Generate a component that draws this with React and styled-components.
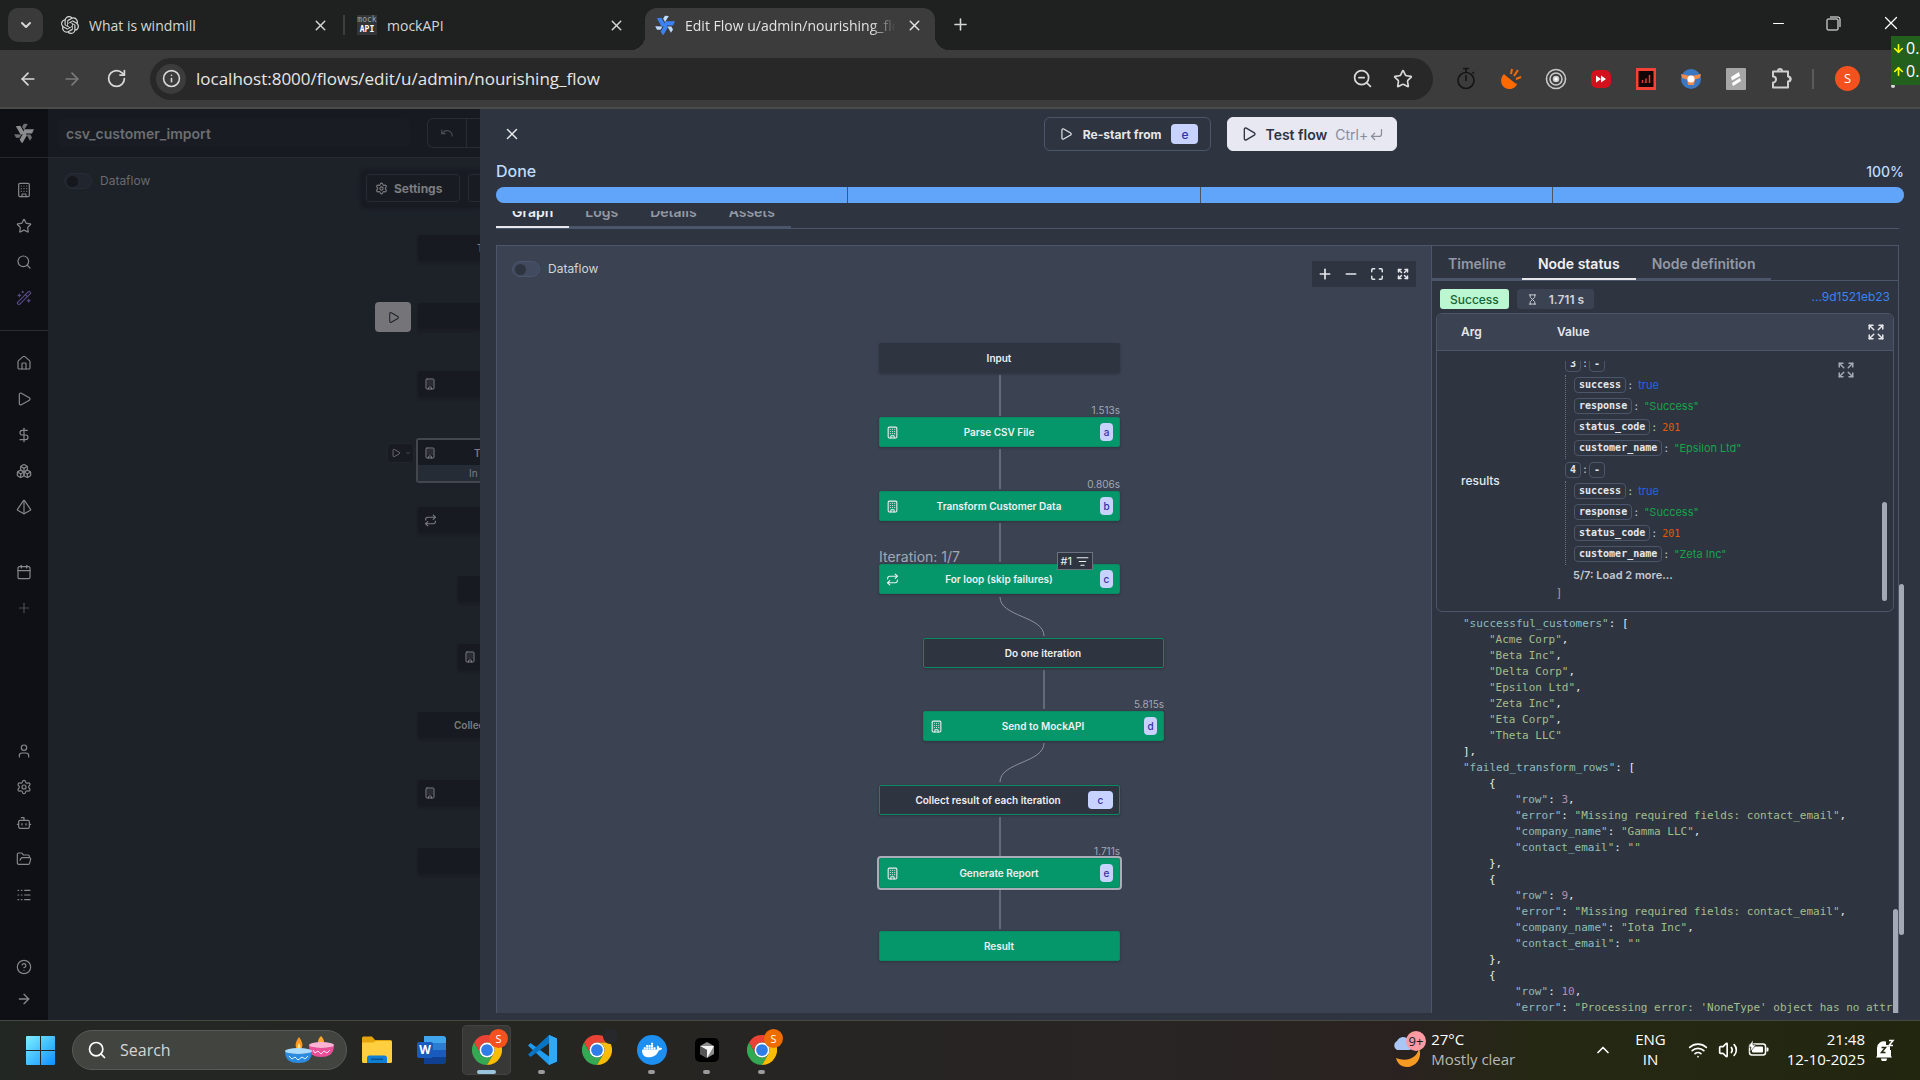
import React from "react";
import styled, { createGlobalStyle, css } from "styled-components";
import {
  ArrowLeft, ArrowRight, ArrowDown, ArrowUp, Bot, Boxes, Building, Calendar, ChevronDown, ChevronUp,
  CornerDownLeft, DollarSign, Expand, FolderOpen, HelpCircle, Home, Hourglass, Info, ListFilter, Logs,
  Maximize, Minus, Play, Plus, Pyramid, Repeat, RotateCw, Search, Settings, Star, Undo, User,
  Volume2, WandSparkles, Wifi, X, ZoomOut,
} from "lucide-react";
import { SiDocker, SiOpenai } from "react-icons/si";

const nord = {
  bg: "#2e3440",
  surface: "#3b4252",
  line: "#4c566a",
  text: "#e5e7eb",
  muted: "#a3a8b3",
};

const ui = `"Open Sans", "Noto Sans", sans-serif`;
const mono = `"DejaVu Sans Mono", "Liberation Mono", monospace`;

const GlobalStyle = createGlobalStyle`
  * { box-sizing: border-box; }
  body { margin: 0; background: #1f2120; overflow: hidden; }
  button, input { font: inherit; color: inherit; }
  button { background: none; border: 0; padding: 0; cursor: pointer; }
  a { text-decoration: none; }
  svg { display: block; flex: none; }
`;

const Screen = styled.div`
  display: flex;
  flex-direction: column;
  height: 100vh;
  font-family: Inter, sans-serif;
  color: ${nord.text};
`;

/* ---------- browser chrome ---------- */

const TabStrip = styled.div`
  display: flex;
  align-items: flex-end;
  height: 50px;
  flex: none;
  background: #1f2120;
  font-family: ${ui};
  font-size: 14px;
  color: #d5d6d6;
`;

const TabSearch = styled.button`
  display: grid;
  place-items: center;
  width: 35px;
  height: 34px;
  margin: 0 8px 8px;
  border-radius: 10px;
  background: #3a3a3a;
`;

const BrowserTab = styled.div`
  position: relative;
  display: flex;
  align-items: center;
  gap: 10px;
  width: 290px;
  height: 42px;
  padding: 0 12px 8px 10px;
  ${(p) => p.$active && css`
    margin-left: 8px;
    color: #e3e3e3;
    background: #3c3c3c;
    border-radius: 12px 12px 0 0;
    &::before, &::after {
      content: "";
      position: absolute;
      bottom: 0;
      width: 14px;
      height: 14px;
    }
    &::before { left: -14px; background: radial-gradient(circle at 0 0, transparent 14px, #3c3c3c 14px); }
    &::after { right: -14px; background: radial-gradient(circle at 100% 0, transparent 14px, #3c3c3c 14px); }
  `}
`;

const TabTitle = styled.span`
  flex: 1;
  min-width: 0;
  overflow: hidden;
  white-space: nowrap;
  ${(p) => p.$fade && css`mask-image: linear-gradient(90deg, #000 88%, transparent);`}
`;

const TabDivider = styled.span`
  width: 2px;
  height: 20px;
  margin: 0 2px 15px;
  background: #3c3e3d;
`;

const MockIcon = styled.span`
  display: grid;
  width: 20px;
  height: 20px;
  background: #333536;
  font: 700 8px/10px ${mono};
  text-align: center;
  color: #fff;
  & > span { color: #9aa3ad; font-weight: 400; }
`;

const NewTab = styled.button`
  margin: 0 0 16px 16px;
`;

const WindowButtons = styled.div`
  display: flex;
  align-items: center;
  gap: 39px;
  margin: 0 18px 16px auto;
  color: #fff;
`;

const AddressRow = styled.div`
  display: flex;
  align-items: center;
  height: 59px;
  flex: none;
  padding: 0 8px 0 18px;
  background: #3c3c3c;
  border-bottom: 2px solid #4a4c49;
  color: #d8d8d8;
  font-family: ${ui};
`;

const NavButtons = styled.div`
  display: flex;
  gap: 24px;
  width: 132px;
  & > :nth-child(2) { color: #7b7b7b; }
`;

const Omnibox = styled.div`
  display: flex;
  align-items: center;
  flex: 1;
  height: 42px;
  padding: 0 20px 0 6px;
  gap: 20px;
  border-radius: 21px;
  background: #282828;
`;

const SiteInfo = styled.button`
  display: grid;
  place-items: center;
  width: 30px;
  height: 30px;
  border-radius: 50%;
  background: #3c3c3c;
`;

const UrlInput = styled.input`
  flex: 1;
  min-width: 0;
  margin-left: -10px;
  padding: 0;
  border: 0;
  outline: 0;
  background: none;
  font-size: 17px;
  color: #e6e6e6;
`;

const Extensions = styled.div`
  display: flex;
  align-items: center;
  gap: 23px;
  padding-left: 22px;
`;

const Divider = styled.span`
  width: 2px;
  height: 20px;
  margin: 0 -2px 0 -3px;
  background: #5b5b5b;
`;

const Avatar = styled.span`
  display: grid;
  place-items: center;
  width: ${(p) => p.$size || 25}px;
  height: ${(p) => p.$size || 25}px;
  border-radius: 50%;
  background: ${(p) => p.$color || "#f4511e"};
  color: #fff;
  font-size: ${(p) => (p.$size ? 11 : 13)}px;
  line-height: 1;
`;

const MenuDots = styled.button`
  display: grid;
  gap: 3px;
  width: 4px;
  margin-left: 8px;
  margin-right: 17px;
  & > i { width: 4px; height: 4px; border-radius: 50%; background: #d8d8d8; }
`;

const NetMeter = styled.div`
  position: absolute;
  top: 36px;
  right: 0;
  width: 29px;
  height: 49px;
  padding: 1px 0 0 1px;
  overflow: hidden;
  background: #235f1d;
  color: #fff;
  font: 16px/23px ${ui};
  & > div { display: flex; align-items: center; gap: 1px; }
  svg { color: #ffff00; }
`;

/* ---------- dimmed editor ---------- */

const Workspace = styled.div`
  display: flex;
  flex: 1;
  min-height: 0;
  background: #1d2128;
`;

const Sidebar = styled.nav`
  display: flex;
  flex-direction: column;
  width: 48px;
  flex: none;
  padding-bottom: 7px;
  background: #0f1015;
  color: #86878a;
`;

const SideLogo = styled.a`
  display: grid;
  place-items: center;
  height: 49px;
  border-bottom: 1px solid #24272c;
`;

const SideGroup = styled.div`
  display: flex;
  flex-direction: column;
  padding: ${(p) => p.$pad || "0"};
  ${(p) => p.$line && css`border-bottom: 1px solid #2b2d32;`}
  ${(p) => p.$push && css`margin-top: auto;`}
`;

const SideItem = styled.a`
  display: grid;
  place-items: center;
  height: ${(p) => (p.$short ? 28 : 36)}px;
  color: ${(p) => p.$color || "inherit"};
`;

const Editor = styled.section`
  display: flex;
  flex-direction: column;
  flex: 1;
  min-width: 0;
  overflow: hidden;
  color: #7b7d81;
`;

const EditorHeader = styled.header`
  display: flex;
  align-items: center;
  justify-content: space-between;
  height: 49px;
  flex: none;
  padding-left: 10px;
  background: #171a20;
  border-bottom: 1px solid #282b30;
`;

const FlowName = styled.input`
  width: 352px;
  height: 28px;
  flex: none;
  padding: 0 8px;
  border: 0;
  border-radius: 4px;
  background: #191c22;
  font-size: 14px;
  font-weight: 600;
  color: #6c6e72;
`;

const SplitButtons = styled.div`
  display: flex;
  width: 53px;
  height: 30px;
  border: 1px solid #292c33;
  border-right: 0;
  border-radius: 6px 0 0 6px;
  color: #4c4f55;
  & > button {
    display: grid;
    place-items: center;
    width: 39px;
    border-right: 1px solid #292c33;
  }
`;

const EditorCanvas = styled.div`
  position: relative;
  flex: 1;
`;

const EditorBar = styled.div`
  display: flex;
  justify-content: space-between;
  align-items: flex-start;
  padding: 12px 0 0 16px;
`;

const SettingsPanel = styled.div`
  display: flex;
  gap: 8px;
  padding: 4px 0 4px 4px;
  border-radius: 4px 0 0 4px;
  background: #181b22;
  box-shadow: 0 1px 4px #14171c;
`;

const DarkButton = styled.button`
  display: flex;
  align-items: center;
  gap: 6px;
  width: ${(p) => (p.$open ? 12 : 94)}px;
  height: 28px;
  padding: 0 ${(p) => (p.$open ? 0 : 8)}px;
  border: 1px solid #282b32;
  border-right-width: ${(p) => (p.$open ? 0 : 1)}px;
  border-radius: ${(p) => (p.$open ? "4px 0 0 4px" : "4px")};
  font-size: 12px;
  font-weight: 700;
`;

const SwitchLabel = styled.label`
  display: flex;
  align-items: center;
  gap: 8px;
  font-size: 12px;
  line-height: 22px;
  color: ${(p) => (p.$dim ? "#696b70" : "#d1d5db")};
`;

const Switch = styled.input.attrs({ type: "checkbox" })`
  appearance: none;
  display: flex;
  align-items: center;
  width: 28px;
  height: 16px;
  margin: 0;
  padding: 0 2px;
  border-radius: 8px;
  border: 1px solid ${(p) => (p.$dim ? "#282c35" : "#4a556b")};
  background: ${(p) => (p.$dim ? "#21252d" : "#414a5e")};
  &::before {
    content: "";
    width: 11px;
    height: 11px;
    border-radius: 50%;
    background: ${(p) => (p.$dim ? "#15171c" : "#2e3440")};
  }
`;

const GhostNode = styled.div`
  position: absolute;
  left: ${(p) => p.$x}px;
  top: ${(p) => p.$y}px;
  right: 0;
  display: flex;
  align-items: center;
  height: 26px;
  padding-left: ${(p) => p.$indent || 6}px;
  background: #171a20;
  border-radius: 2px 0 0 2px;
  box-shadow: 0 2px 3px #1a1d23;
  font-size: 10px;
  font-weight: 600;
  white-space: nowrap;
  overflow: hidden;
`;

const GhostSelected = styled.div`
  position: absolute;
  left: 368px;
  top: 280px;
  right: 0;
  border: 2px solid #43464c;
  border-right: 0;
  border-radius: 3px 0 0 3px;
  font-size: 10px;
  font-weight: 600;
  & > div {
    display: flex;
    align-items: center;
    gap: 38px;
    height: 25px;
    padding-left: 6px;
    overflow: hidden;
    background: #171a20;
  }
  & > div + div { height: 16px; padding-left: 51px; background: #262c36; font-weight: 400; }
`;

const GhostRun = styled.button`
  position: absolute;
  left: 327px;
  top: 144px;
  display: grid;
  place-items: center;
  width: 36px;
  height: 30px;
  border-radius: 4px;
  background: #757479;
  color: #22252c;
`;

const GhostSplit = styled.button`
  position: absolute;
  left: 339px;
  top: 285px;
  display: flex;
  align-items: center;
  gap: 4px;
  width: 27px;
  height: 20px;
  padding-left: 3px;
  border: 1px solid #22252b;
  border-radius: 4px;
  background: #181b21;
`;

/* ---------- drawer ---------- */

const Drawer = styled.section`
  display: flex;
  flex-direction: column;
  flex: 0 0 75%;
  min-width: 0;
  padding: 8px 16px 7px;
  background: ${nord.bg};
`;

const DrawerHeader = styled.header`
  display: flex;
  justify-content: space-between;
  align-items: center;
  height: 34px;
  flex: none;
  padding-left: 7px;
`;

const Actions = styled.div`
  display: flex;
  gap: 16px;
  flex: 1;
  justify-content: center;
  padding-left: 16px;
`;

const RestartButton = styled.button`
  display: flex;
  align-items: center;
  gap: 10px;
  height: 34px;
  padding: 0 12px 0 14px;
  border: 1px solid ${nord.line};
  border-radius: 6px;
  font-size: 12px;
  font-weight: 700;
  ${(p) => p.$primary && css`
    gap: 8px;
    padding: 0 12px 0 13px;
    border-color: #e8e8f3;
    background: #e8e8f3;
    color: #2e3440;
    font-size: 14px;
    font-weight: 600;
  `}
`;

const Shortcut = styled.span`
  display: flex;
  align-items: center;
  gap: 1px;
  color: #878c99;
  font-weight: 400;
`;

const Badge = styled.span`
  display: grid;
  place-items: center;
  min-width: ${(p) => p.$min || 13}px;
  height: ${(p) => p.$height || 18}px;
  padding: 0 3px;
  border-radius: 4px;
  background: #c7d2fe;
  color: #3730a3;
  font-size: ${(p) => p.$size || 10}px;
  font-weight: 500;
`;

const ProgressHead = styled.div`
  display: flex;
  justify-content: space-between;
  align-items: flex-end;
  height: 20px;
  margin: 10px 0 6px;
  font-size: 16px;
  line-height: 20px;
  font-weight: 500;
  color: #bfdbfe;
  & > output { font-size: 14px; line-height: 18px; }
`;

const Progress = styled.div`
  display: grid;
  grid-template-columns: repeat(4, 1fr);
  gap: 1px;
  height: 16px;
  flex: none;
  border-radius: 8px;
  overflow: hidden;
  background: #4b5563;
  & > span { background: #60a5fa; }
`;

const Scroller = styled.div`
  position: relative;
  display: flex;
  flex-direction: column;
  flex: 1;
  min-height: 0;
  margin-top: 8px;
  padding-right: 5px;
  overflow: hidden;
`;

const Thumb = styled.span`
  position: absolute;
  right: ${(p) => p.$right || 0}px;
  top: ${(p) => p.$top}px;
  width: 5px;
  height: ${(p) => p.$height}px;
  border-radius: 3px;
  background: #a3a9b5;
`;

const Tabs = styled.div`
  display: flex;
  flex: none;
  height: 35px;
  margin-top: ${(p) => (p.$scrolled ? -17 : 0)}px;
  border-bottom: 1px solid ${nord.line};
`;

const Tab = styled.button`
  height: 100%;
  padding: 2px 16px 0;
  border-bottom: 2px solid ${(p) => (p.$active ? "#e5e7eb" : nord.line)};
  font-size: 14px;
  font-weight: 600;
  color: ${(p) => (p.$active ? "#eef0f3" : "#9298a5")};
`;

const Split = styled.div`
  display: flex;
  flex: 1;
  min-height: 0;
  margin-top: 16px;
  border: 1px solid ${nord.line};
  border-bottom: 0;
`;

const Graph = styled.div`
  position: relative;
  flex: 1;
  min-width: 0;
  overflow: hidden;
  background: ${nord.surface};
`;

const GraphBar = styled.div`
  display: flex;
  justify-content: space-between;
  align-items: flex-start;
  padding: 12px 15px 0;
`;

const Controls = styled.div`
  display: flex;
  margin-top: 3px;
  height: 26px;
  background: ${nord.bg};
  color: #e5e7eb;
  & > button { display: grid; place-items: center; width: 26px; }
`;

const Edges = styled.svg`
  position: absolute;
  left: 0;
  top: 0;
  fill: none;
  stroke: #8b909c;
`;

const NodeBox = styled.div`
  position: absolute;
  left: ${(p) => p.$x}px;
  top: ${(p) => p.$y}px;
  display: grid;
  grid-template-columns: 28px 1fr 28px;
  align-items: center;
  justify-items: center;
  width: 241px;
  height: 30px;
  padding: 0 6px 0 5px;
  border: 1px solid ${(p) => (p.$kind === "plain" ? "#2e3440" : "#0a8a61")};
  border-radius: 2px;
  background: ${(p) => (p.$kind === "done" ? "#059669" : "#2e3440")};
  box-shadow: 0 1px 3px rgba(0, 0, 0, 0.25);
  ${(p) => p.$selected && css`outline: 2px solid #a9adb8;`}
  font-size: 10px;
  font-weight: 600;
  color: #eef0f3;
  & > svg { justify-self: start; margin-left: 1px; }
  & > b { font-weight: 600; line-height: 12px; padding-bottom: 1px; grid-column: 2; white-space: nowrap; }
  & > ${Badge} { grid-column: 3; justify-self: end; }
  ${(p) => p.$wide && css`grid-template-columns: 6px 1fr 28px;`}
`;

const Above = styled.span`
  position: absolute;
  bottom: 29px;
  ${(p) => (p.$left ? "left: -1px;" : "right: -1px;")}
  font-size: ${(p) => (p.$left ? 14 : 10)}px;
  line-height: 14px;
  font-weight: 400;
  color: ${nord.muted};
`;

const IterationPicker = styled.button`
  position: absolute;
  right: 26px;
  top: -13px;
  display: flex;
  align-items: center;
  gap: 4px;
  height: 18px;
  padding: 0 3px;
  border: 1px solid #6b7280;
  background: ${nord.bg};
  font-size: 11px;
  font-weight: 400;
`;

const Details = styled.div`
  position: relative;
  display: flex;
  flex-direction: column;
  flex: 0 0 calc(100% / 3);
  min-width: 0;
  border-left: 1px solid ${nord.line};
  overflow: hidden;
`;

const StatusRow = styled.div`
  display: flex;
  align-items: flex-start;
  gap: 8px;
  padding: 8px 8px 4px;
  font-size: 12px;
  & > a { margin-left: auto; line-height: 15px; color: #3b82f6; }
`;

const Pill = styled.span`
  display: flex;
  align-items: center;
  gap: 11px;
  height: 20px;
  padding: 0 10px;
  border-radius: 3px;
  font-weight: ${(p) => (p.$ok ? 500 : 600)};
  background: ${(p) => (p.$ok ? "#bbf7d0" : nord.surface)};
  color: ${(p) => (p.$ok ? "#166534" : "#d1d5db")};
`;

const TableCard = styled.div`
  position: relative;
  flex: none;
  margin: 0 4px;
  border: 1px solid ${nord.line};
  border-radius: 6px;
  overflow: hidden;
`;

const Table = styled.table`
  width: 100%;
  border-collapse: collapse;
  table-layout: fixed;
  font-size: 12px;
  text-align: left;
  th { height: 36px; padding: 0 0 0 24px; background: ${nord.surface}; border-bottom: 1px solid ${nord.line}; font-weight: 600; }
  th:first-child { width: 96px; }
  td { padding: 10px 0 10px 24px; font-weight: 500; }
`;

const HeadCell = styled.div`
  display: flex;
  justify-content: space-between;
  align-items: center;
  padding-right: 8px;
`;

const ValueView = styled.div`
  position: relative;
  display: flex;
  flex-direction: column;
  justify-content: flex-end;
  height: 240px;
  overflow: hidden;
  font-size: 11px;
  font-weight: 400;
  & > * { flex-shrink: 0; }
`;

const JsonGroup = styled.div`
  margin-left: 8px;
`;

const JsonChildren = styled.div`
  border-left: 1px dotted #6b7280;
  padding-left: 8px;
`;

const JsonRow = styled.div`
  display: flex;
  align-items: center;
  gap: 1px;
  height: ${(p) => (p.$head ? 22 : 21)}px;
  font-family: ${mono};
  font-size: 10px;
  color: #c4c8d0;
`;

const Key = styled.span`
  height: 16px;
  padding: 0 4px;
  border: 1px solid ${nord.line};
  border-radius: 4px;
  line-height: 13px;
  font-weight: 700;
  color: #e5e7eb;
`;

const JsonValue = styled.span`
  margin-left: 4px;
  font-family: ${(p) => (p.$type === "number" ? mono : "Inter, sans-serif")};
  font-size: ${(p) => (p.$type === "number" ? 10 : 11)}px;
  color: ${(p) => ({ boolean: "#2563eb", string: "#16a34a", number: "#ea580c" }[p.$type])};
`;

const LoadMore = styled.button`
  align-self: flex-start;
  margin-left: 16px;
  height: 20px;
  font-size: 11px;
  font-weight: 600;
  color: #c4c8d0;
`;

const CloseBracket = styled.div`
  height: 16px;
  line-height: 16px;
  color: #a3a8b3;
`;

const FloatingExpand = styled.button`
  position: absolute;
  right: 38px;
  top: 47px;
  color: #a3a8b3;
`;

const Code = styled.pre`
  flex: 1;
  min-height: 0;
  margin: 4px 5px 0 5px;
  overflow: hidden;
  font: 11px/16px ${mono};
  color: #e5e9f0;
`;

const CodeLine = styled.div`
  height: 16px;
  padding-left: ${(p) => p.$depth * 26}px;
`;

const Token = styled.span`
  color: ${(p) => ({ key: "#8fbcbb", string: "#a3be8c", number: "#b48ead" }[p.$type])};
`;

/* ---------- task bar ---------- */

const Taskbar = styled.footer`
  display: flex;
  align-items: center;
  height: 60px;
  flex: none;
  padding: 0 25px 1px 26px;
  border-top: 1px solid #474840;
  background: linear-gradient(90deg, #232723 0%, #262522 35%, #282524 60%, #2a2220 73%, #252813 80%, #23260f 100%);
  font-family: ${ui};
  color: #fff;
`;

const SearchBox = styled.label`
  display: flex;
  align-items: center;
  gap: 13px;
  width: 275px;
  height: 40px;
  margin-left: 17px;
  padding: 0 11px 0 14px;
  border: 1px solid #595a56;
  border-radius: 20px;
  background: #42443f;
  & > input {
    flex: 1;
    min-width: 0;
    padding: 0;
    border: 0;
    outline: 0;
    background: none;
    font-size: 16px;
    &::placeholder { color: #d6d6d4; opacity: 1; }
  }
`;

const Apps = styled.div`
  display: flex;
  gap: 6px;
  margin-left: 5px;
`;

const AppButton = styled.button`
  position: relative;
  display: grid;
  place-items: center;
  width: 49px;
  height: 50px;
  border-radius: 5px;
  ${(p) => p.$active && css`background: #383937; box-shadow: inset 0 0 0 1px #434441;`}
  &::after {
    content: "";
    position: absolute;
    bottom: 1px;
    width: ${(p) => (p.$active ? 19 : 7)}px;
    height: 4px;
    border-radius: 2px;
    background: ${(p) => (p.$active ? "#9ac4dc" : p.$running ? "#9b9b9b" : "transparent")};
  }
  & > ${Avatar} { position: absolute; right: 3px; top: 4px; }
`;

const Tray = styled.div`
  display: flex;
  align-items: center;
  margin-left: auto;
  font-size: 15px;
  line-height: 20px;
`;

const Weather = styled.button`
  display: flex;
  align-items: center;
  gap: 5px;
  width: 201px;
  text-align: left;
  & > span { padding-bottom: 3px; }
  & small { display: block; font-size: 15px; color: #b9b9b4; }
`;

const TrayText = styled.div`
  text-align: ${(p) => p.$align};
  margin: ${(p) => p.$margin};
  padding-bottom: 3px;
`;

const TrayIcons = styled.div`
  display: flex;
  gap: 10px;
`;

/* ---------- drawings ---------- */

function WindmillMark({ size, dark, light }) {
  return (
    <svg width={size} height={size} viewBox="0 0 24 24" aria-hidden="true">
      {[0, 120, 240].map((a) => (
        <g key={a} transform={`rotate(${a} 12 12)`}>
          <path d="M10 12.5 12.6 7.6 24 7.6 21.6 12.5Z" fill={dark} />
          <path d="M15 13.8h4.6l2 3.6-2.4 4Z" fill={light} />
        </g>
      ))}
    </svg>
  );
}

function ChromeMark() {
  return (
    <svg width="30" height="30" viewBox="0 0 48 48" aria-hidden="true">
      <path fill="#ea4335" d="M3.2 12A24 24 0 0 1 44.8 12H24A12 12 0 0 0 13.6 30Z" />
      <path fill="#34a853" d="M3.2 12 13.6 30A12 12 0 0 0 34.4 30L24 48A24 24 0 0 1 3.2 12Z" />
      <path fill="#fbbc04" d="M44.8 12A24 24 0 0 1 24 48L34.4 30A12 12 0 0 0 24 12Z" />
      <circle cx="24" cy="24" r="12" fill="#fff" />
      <circle cx="24" cy="24" r="9.4" fill="#2f7de9" />
    </svg>
  );
}

function WindowsMark() {
  return (
    <svg width="29" height="29" viewBox="0 0 29 29" aria-hidden="true">
      <linearGradient id="win" x1="0" y1="0" x2="1" y2="1" gradientUnits="objectBoundingBox">
        <stop offset="0" stopColor="#7df0ff" />
        <stop offset="1" stopColor="#0f8fff" />
      </linearGradient>
      <path fill="url(#win)" d="M1 0h13v14H0V1a1 1 0 0 1 1-1ZM15 0h13a1 1 0 0 1 1 1v13H15ZM0 15h14v14H1a1 1 0 0 1-1-1ZM15 15h14v13a1 1 0 0 1-1 1H15Z" />
    </svg>
  );
}

function Diyas() {
  return (
    <svg width="50" height="28" viewBox="0 0 50 28" aria-hidden="true">
      <path d="M14 1c4 5 5 11 0 14-5-3-4-9 0-14Z" fill="#ff9a1f" />
      <path d="M14 7c2 3 2 6 0 8-2-2-2-5 0-8Z" fill="#ffe08a" />
      <path d="M36 0c4 4 4 8 0 11-4-3-4-7 0-11Z" fill="#ffa733" />
      <path d="M24 9c0 9 4 12 12 12s13-3 13-12c-3 4-22 4-25 0Z" fill="#ec4f9a" />
      <ellipse cx="36.500" cy="9" rx="12.500" ry="3" fill="#ffb3d4" />
      <path d="M28 14l2 3 3-2 3 3 3-3 3 2 3-3" stroke="#ffe3ef" fill="none" />
      <path d="M0 15c0 9 5 12 13.500 12S27 24 27 15c-3 4-24 4-27 0Z" fill="#2b8be0" />
      <ellipse cx="13.500" cy="15" rx="13.500" ry="3" fill="#a9dcff" />
      <path d="M4 20l3 3 3-2 3 3 4-3 3 2 3-3" stroke="#dff2ff" fill="none" />
    </svg>
  );
}

function FolderMark() {
  return (
    <svg width="30" height="28" viewBox="0 0 30 28" aria-hidden="true">
      <path d="M0 2a1.500 1.500 0 0 1 1.500-1.500h8.500L13 4h15.500A1.500 1.500 0 0 1 30 5.500V10H0Z" fill="#e5a50a" />
      <path d="M0 6.500h11L14 5h14.500A1.500 1.500 0 0 1 30 6.500v19a1.500 1.500 0 0 1-1.500 1.500h-27A1.500 1.500 0 0 1 0 25.500Z" fill="#ffcf3f" />
      <path d="M5 27v-5a2.500 2.500 0 0 1 2.500-2.500h15A2.500 2.500 0 0 1 25 22v5Z" fill="#0f7fd4" />
      <path d="M9 23.300h12" stroke="#0a4f8f" strokeWidth="1.500" />
    </svg>
  );
}

const WordTile = styled.span`
  display: grid;
  align-items: center;
  width: 29px;
  height: 28px;
  border-radius: 3px;
  background: linear-gradient(#41a5ee 0 25%, #2b7cd3 25% 50%, #185abd 50% 75%, #103f91 75%) right / 22px 100% no-repeat;
  & > b {
    width: 16px;
    height: 16px;
    border-radius: 2px;
    background: #185abd;
    font-size: 12px;
    line-height: 16px;
    text-align: center;
  }
`;

function CodeMark() {
  return (
    <svg width="30" height="30" viewBox="0 0 30 30" aria-hidden="true">
      <path d="M22 0 30 3.500v23L22 30 1 10.500 3.500 8 22 21.500Z" fill="#1f9cf0" />
      <path d="M22 0v8.500L3.500 22 1 19.500Z" fill="#0a74c4" />
      <path d="M22 0 30 3.500v23L22 30Z" fill="#2fa8f5" />
    </svg>
  );
}

function CursorMark() {
  return (
    <svg width="24" height="24" viewBox="0 0 24 24" aria-hidden="true">
      <rect width="24" height="24" rx="5" fill="#000" />
      <path d="M12 4 19 8v8l-7 4-7-4V8Z" fill="#8b8b8b" />
      <path d="M5 8h14l-7 12V12Z" fill="#f4f4f4" />
      <path d="M5 8l7 4v8l-7-4Z" fill="#555" />
    </svg>
  );
}

const DockerTile = styled.span`
  display: grid;
  place-items: center;
  width: 30px;
  height: 30px;
  border-radius: 50%;
  background: #1d8ff0;
  color: #fff;
`;

function WeatherMark() {
  return (
    <svg width="34" height="38" viewBox="0 0 34 38" aria-hidden="true">
      <path d="M27 17c4 11-4 19-12 19-6 0-10-4-11-9 10 4 21 1 23-10Z" fill="#f59a23" />
      <path d="M5 19a5 5 0 0 1 0-9 7 7 0 0 1 12-1 5 5 0 0 1 0 10Z" fill="#a9c6f5" />
      <circle cx="24" cy="10" r="10" fill="#ff99a4" />
      <text x="24" y="15" textAnchor="middle" fontSize="13" fontFamily="Open Sans" fill="#1b1b1b">9+</text>
    </svg>
  );
}

function BatteryMark() {
  return (
    <svg width="21" height="18" viewBox="0 0 21 18" aria-hidden="true">
      <rect x="1.500" y="4" width="16" height="11" rx="2.500" fill="none" stroke="#fff" strokeWidth="1.500" />
      <rect x="4" y="6.500" width="11" height="6" rx="1" fill="#fff" />
      <path d="M18.500 7.500h1a1 1 0 0 1 1 1v2a1 1 0 0 1-1 1h-1Z" fill="#fff" />
      <path d="M5 0 0 7h3l-1 5 6-7H5Z" fill="#fff" stroke="#23260f" strokeWidth=".6" />
    </svg>
  );
}

function BellMark() {
  return (
    <svg width="20" height="22" viewBox="0 0 20 22" aria-hidden="true">
      <path d="M2 17V9a7 7 0 0 1 9-6.500V6h4v5h1v6l1 1.500H1ZM6 19.500h6a3 3 0 0 1-6 0Z" fill="#fff" />
      <path d="M6.500 8.500h4l-4 5h4M14 1.500h4l-4 5h4" fill="none" stroke="#23260f" strokeWidth="1.500" />
      <path d="M14 1.500h4l-4 5h4" fill="none" stroke="#fff" strokeWidth="1.500" />
    </svg>
  );
}

function ExtensionIcons() {
  return (
    <>
      <svg width="22" height="24" viewBox="0 0 22 24" fill="none" stroke="#151515" strokeWidth="1.600">
        <circle cx="11" cy="13.500" r="8" /><path d="M11 8v6M8 1.500h6M11 2v3M17.500 5l1.500 1.500" />
      </svg>
      <svg width="22" height="24" viewBox="0 0 22 24" fill="#ff6a00">
        <path d="M4 7c-6 6-2 15 5 15 4 0 7-2 8-5Z" /><path d="M5 7l11 9" stroke="#3c3c3c" strokeWidth="1.500" />
        <path d="M11 7l1-5M14 9l4-6M16 12l5-2" stroke="#ff6a00" strokeWidth="2" />
      </svg>
      <svg width="22" height="24" viewBox="0 0 22 24" fill="none" stroke="#c9c9c9" strokeWidth="1.600">
        <circle cx="11" cy="12" r="9.500" /><circle cx="11" cy="12" r="6" /><circle cx="11" cy="12" r="2.500" fill="#fff" />
      </svg>
      <svg width="22" height="24" viewBox="0 0 22 24">
        <rect x="1" y="3" width="20" height="18" rx="6" fill="#d4101c" />
        <path d="M6 8.500l5 3.500-5 3.500ZM11 8.500l5 3.500-5 3.500Z" fill="#fff" />
      </svg>
      <svg width="22" height="24" viewBox="0 0 22 24">
        <path d="M1 1h20v22H1Z" fill="#f44336" /><path d="M3.500 4h15v16h-15Z" fill="#120505" />
        <path d="M7.500 16v-3M10.500 16v-1.500M11 11.500V16M14.500 8v8" stroke="#e53935" strokeWidth="1.500" />
      </svg>
      <svg width="22" height="24" viewBox="0 0 22 24">
        <circle cx="11" cy="12" r="10" fill="#3b78c4" />
        <path d="M1 7l7 1.500h6L21 7l-1 4-5 1.500L14 18H8l-1-5.500L2 11Z" fill="#f08a4b" />
        <circle cx="11" cy="12" r="3.500" fill="#fff" />
      </svg>
      <svg width="22" height="24" viewBox="0 0 22 24">
        <rect x="1" y="1" width="20" height="22" rx="1" fill="#a6a6a6" />
        <path d="M6 10l8-5 1 4-8 4.500ZM7 16l8-5 1 3-8 5Z" fill="#fff" />
      </svg>
      <svg width="22" height="24" viewBox="0 0 22 24" fill="none" stroke="#d0d0d0" strokeWidth="2">
        <path d="M3 4.500h15v5a2 2 0 0 1 0 5v6H3v-5a3 3 0 0 0 0-6Z" strokeLinejoin="round" />
        <path d="M8 4a2 2 0 0 1 4 0M18.500 10a2 2 0 0 1 0 4" />
      </svg>
    </>
  );
}

/* ---------- data ---------- */

const graphNodes = [
  { x: 382, y: 97, label: "Input", kind: "plain" },
  { x: 382, y: 171, label: "Parse CSV File", kind: "done", icon: Building, id: "a", time: "1.513s" },
  { x: 382, y: 245, label: "Transform Customer Data", kind: "done", icon: Building, id: "b", time: "0.806s" },
  { x: 382, y: 318, label: "For loop (skip failures)", kind: "done", icon: Repeat, id: "c", loop: true },
  { x: 426, y: 392, label: "Do one iteration", kind: "outline" },
  { x: 426, y: 465, label: "Send to MockAPI", kind: "done", icon: Building, id: "d", time: "5.815s" },
  { x: 382, y: 539, label: "Collect result of each iteration", kind: "outline", id: "c", wide: true },
  { x: 382, y: 612, label: "Generate Report", kind: "done", icon: Building, id: "e", time: "1.711s", selected: true },
  { x: 382, y: 685, label: "Result", kind: "done" },
];

const edges = [
  "M503 129V170", "M503 203V243", "M503 277V316",
  "M503 351C503 371 547 370 547 390",
  "M547 424V463",
  "M547 497C547 517 503 516 503 536",
  "M503 571V611", "M503 643V683",
];

const results = [
  { index: 3, name: "Epsilon Ltd" },
  { index: 4, name: "Zeta Inc" },
];

const report = `    "successful_customers": [
        "Acme Corp",
        "Beta Inc",
        "Delta Corp",
        "Epsilon Ltd",
        "Zeta Inc",
        "Eta Corp",
        "Theta LLC"
    ],
    "failed_transform_rows": [
        {
            "row": 3,
            "error": "Missing required fields: contact_email",
            "company_name": "Gamma LLC",
            "contact_email": ""
        },
        {
            "row": 9,
            "error": "Missing required fields: contact_email",
            "company_name": "Iota Inc",
            "contact_email": ""
        },
        {
            "row": 10,
            "error": "Processing error: 'NoneType' object has no attribute"`;

function highlight(line) {
  return line.split(/("[^"]*"(?=:)|"[^"]*"|\b\d+\b)/).filter(Boolean).map((part, i, all) => {
    if (/^\d/.test(part)) return <Token key={i} $type="number">{part}</Token>;
    if (!part.startsWith('"')) return part;
    return <Token key={i} $type={(all[i + 1] || "").startsWith(":") ? "key" : "string"}>{part}</Token>;
  });
}

const sideTop = [Building, Star, Search, WandSparkles];
const sideMain = [Home, Play, DollarSign, Boxes, Pyramid];
const sideLow = [User, Settings, Bot, FolderOpen, Logs];

/* ---------- sections ---------- */

function Browser() {
  return (
    <>
      <TabStrip>
        <TabSearch aria-label="Search tabs"><ChevronDown size={16} strokeWidth={3} /></TabSearch>
        <BrowserTab>
          <SiOpenai size={18} /><TabTitle>What is windmill</TabTitle><X size={17} />
        </BrowserTab>
        <TabDivider />
        <BrowserTab>
          <MockIcon><span>mock</span>API</MockIcon><TabTitle>mockAPI</TabTitle><X size={17} />
        </BrowserTab>
        <BrowserTab $active>
          <WindmillMark size={20} dark="#3b82f6" light="#bfdbfe" />
          <TabTitle $fade>Edit Flow u/admin/nourishing_flow</TabTitle><X size={17} />
        </BrowserTab>
        <NewTab aria-label="New tab"><Plus size={19} /></NewTab>
        <WindowButtons>
          <Minus size={17} strokeWidth={1.5} />
          <svg width="15" height="15" viewBox="0 0 15 15" fill="none" stroke="#fff"><rect x="1" y="3" width="11" height="11" rx="1" /><path d="M4 1h8a2 2 0 0 1 2 2v8" /></svg>
          <X size={22} strokeWidth={1.3} />
        </WindowButtons>
      </TabStrip>
      <AddressRow>
        <NavButtons>
          <button aria-label="Back"><ArrowLeft size={20} /></button>
          <button aria-label="Forward"><ArrowRight size={20} /></button>
          <button aria-label="Reload"><RotateCw size={21} /></button>
        </NavButtons>
        <Omnibox>
          <SiteInfo aria-label="Site information"><Info size={19} /></SiteInfo>
          <UrlInput aria-label="Address" defaultValue="localhost:8000/flows/edit/u/admin/nourishing_flow" />
          <ZoomOut size={21} /><Star size={20} />
        </Omnibox>
        <Extensions>
          <ExtensionIcons />
          <Divider />
          <Avatar>S</Avatar>
          <MenuDots aria-label="Menu"><i /><i /><i /></MenuDots>
        </Extensions>
      </AddressRow>
      <NetMeter>
        <div><ArrowDown size={13} strokeWidth={3} />0.</div>
        <div><ArrowUp size={13} strokeWidth={3} />0.</div>
      </NetMeter>
    </>
  );
}

function SideNav() {
  const item = (Icon, i, color) => (
    <SideItem href="#" key={i} $color={color}><Icon size={16} strokeWidth={1.8} /></SideItem>
  );
  return (
    <Sidebar>
      <SideLogo href="#" aria-label="Windmill"><WindmillMark size={20} dark="#8d8d8f" light="#6f7073" /></SideLogo>
      <SideGroup $line $pad="14px 0 14px">
        {sideTop.map((Icon, i) => item(Icon, i, i === 3 ? "#574a86" : undefined))}
      </SideGroup>
      <SideGroup $pad="14px 0 0">{sideMain.map((Icon, i) => item(Icon, i))}</SideGroup>
      <SideGroup $pad="29px 0 0">{item(Calendar, 0)}{item(Plus, 1, "#4b4c50")}</SideGroup>
      <SideGroup $push>{sideLow.map((Icon, i) => item(Icon, i))}</SideGroup>
      <SideGroup $pad="36px 0 0">
        {item(HelpCircle, 0)}
        <SideItem href="#" $short><ArrowRight size={16} /></SideItem>
      </SideGroup>
    </Sidebar>
  );
}

function DimmedEditor() {
  return (
    <Editor>
      <EditorHeader>
        <FlowName aria-label="Flow name" defaultValue="csv_customer_import" />
        <SplitButtons><button aria-label="Undo"><Undo size={14} /></button></SplitButtons>
      </EditorHeader>
      <EditorCanvas>
        <EditorBar>
          <SwitchLabel $dim><Switch $dim />Dataflow</SwitchLabel>
          <SettingsPanel>
            <DarkButton><Settings size={13} />Settings</DarkButton>
            <DarkButton $open aria-label="More" />
          </SettingsPanel>
        </EditorBar>
        <GhostNode $x={370} $y={77} $indent={59}>Triggers</GhostNode>
        <GhostRun aria-label="Run"><Play size={13} /></GhostRun>
        <GhostNode $x={370} $y={145} />
        <GhostNode $x={370} $y={213}><Building size={12} /></GhostNode>
        <GhostSplit aria-label="Run step"><Play size={10} /><ChevronDown size={6} /></GhostSplit>
        <GhostSelected>
          <div><Building size={12} />Tr</div>
          <div>In</div>
        </GhostSelected>
        <GhostNode $x={370} $y={349}><Repeat size={13} /></GhostNode>
        <GhostNode $x={410} $y={418} />
        <GhostNode $x={410} $y={486}><Building size={12} /></GhostNode>
        <GhostNode $x={370} $y={554} $indent={36}>Collect result</GhostNode>
        <GhostNode $x={370} $y={622}><Building size={12} /></GhostNode>
        <GhostNode $x={370} $y={690} />
      </EditorCanvas>
    </Editor>
  );
}

function FlowGraph() {
  return (
    <Graph>
      <GraphBar>
        <SwitchLabel><Switch />Dataflow</SwitchLabel>
        <Controls>
          <button aria-label="Zoom in"><Plus size={16} strokeWidth={2.5} /></button>
          <button aria-label="Zoom out"><Minus size={16} strokeWidth={2.5} /></button>
          <button aria-label="Fit view"><Maximize size={14} strokeWidth={2.5} /></button>
          <button aria-label="Expand"><Expand size={12} strokeWidth={3} /></button>
        </Controls>
      </GraphBar>
      <Edges width="700" height="740">
        {edges.map((d) => <path key={d} d={d} />)}
      </Edges>
      {graphNodes.map(({ icon: Icon, ...n }) => (
        <NodeBox key={n.label} $x={n.x} $y={n.y} $kind={n.kind} $selected={n.selected} $wide={n.wide}>
          {Icon && <Icon size={13} />}
          <b>{n.label}</b>
          {n.id && <Badge $min={n.wide ? 25 : 13}>{n.id}</Badge>}
          {n.time && <Above>{n.time}</Above>}
          {n.loop && <Above $left>Iteration: 1/7</Above>}
          {n.loop && <IterationPicker>#1<ListFilter size={13} /></IterationPicker>}
        </NodeBox>
      ))}
    </Graph>
  );
}

function ResultItem({ index, name }) {
  return (
    <JsonGroup>
      <JsonRow $head><Key>{index}</Key>:<Key>-</Key></JsonRow>
      <JsonChildren>
        <JsonRow><Key>success</Key>:<JsonValue $type="boolean">true</JsonValue></JsonRow>
        <JsonRow><Key>response</Key>:<JsonValue $type="string">"Success"</JsonValue></JsonRow>
        <JsonRow><Key>status_code</Key>:<JsonValue $type="number">201</JsonValue></JsonRow>
        <JsonRow><Key>customer_name</Key>:<JsonValue $type="string">"{name}"</JsonValue></JsonRow>
      </JsonChildren>
    </JsonGroup>
  );
}

function NodeDetails() {
  return (
    <Details>
      <Tabs>
        <Tab>Timeline</Tab><Tab $active>Node status</Tab><Tab>Node definition</Tab>
      </Tabs>
      <StatusRow>
        <Pill $ok>Success</Pill>
        <Pill><Hourglass size={11} />1.711 s</Pill>
        <a href="#">...9d1521eb23</a>
      </StatusRow>
      <TableCard>
        <Table>
          <thead>
            <tr><th>Arg</th><th><HeadCell>Value<Expand size={18} /></HeadCell></th></tr>
          </thead>
          <tbody>
            <tr>
              <td>results</td>
              <td>
                <ValueView>
                  {results.map((r) => <ResultItem key={r.index} {...r} />)}
                  <LoadMore>5/7: Load 2 more...</LoadMore>
                  <CloseBracket>]</CloseBracket>
                </ValueView>
              </td>
            </tr>
          </tbody>
        </Table>
        <FloatingExpand aria-label="Expand value"><Expand size={18} /></FloatingExpand>
        <Thumb $right={6} $top={188} $height={99} />
      </TableCard>
      <Code>
        {report.split("\n").map((line, i) => (
          <CodeLine key={i} $depth={line.search(/\S/) / 4}>{highlight(line.trim())}</CodeLine>
        ))}
      </Code>
      <Thumb $top={663} $height={110} />
    </Details>
  );
}

function RunDrawer() {
  return (
    <Drawer>
      <DrawerHeader>
        <button aria-label="Close"><X size={18} /></button>
        <Actions>
          <RestartButton><Play size={14} />Re-start from<Badge $min={27} $height={20} $size={12}>e</Badge></RestartButton>
          <RestartButton $primary><Play size={16} />Test flow<Shortcut>Ctrl+<CornerDownLeft size={15} /></Shortcut></RestartButton>
        </Actions>
      </DrawerHeader>
      <ProgressHead><span>Done</span><output>100%</output></ProgressHead>
      <Progress><span /><span /><span /><span /></Progress>
      <Scroller>
        <Tabs $scrolled>
          <Tab $active>Graph</Tab><Tab>Logs</Tab><Tab>Details</Tab><Tab>Assets</Tab>
        </Tabs>
        <Split>
          <FlowGraph />
          <NodeDetails />
        </Split>
        <Thumb $top={373} $height={351} />
      </Scroller>
    </Drawer>
  );
}

function SystemBar() {
  return (
    <Taskbar>
      <WindowsMark />
      <SearchBox>
        <Search size={20} />
        <input placeholder="Search" aria-label="Search" />
        <Diyas />
      </SearchBox>
      <Apps>
        <AppButton aria-label="File Explorer"><FolderMark /></AppButton>
        <AppButton aria-label="Word"><WordTile><b>W</b></WordTile></AppButton>
        <AppButton aria-label="Chrome" $active><ChromeMark /><Avatar $size={19}>S</Avatar></AppButton>
        <AppButton aria-label="VS Code" $running><CodeMark /></AppButton>
        <AppButton aria-label="Chrome profile"><ChromeMark /><Avatar $size={15} $color="#26282c" /></AppButton>
        <AppButton aria-label="Docker" $running><DockerTile><SiDocker size={20} /></DockerTile></AppButton>
        <AppButton aria-label="Cursor" $running><CursorMark /></AppButton>
        <AppButton aria-label="Chrome work" $running><ChromeMark /><Avatar $size={19} $color="#ef6c00">S</Avatar></AppButton>
      </Apps>
      <Tray>
        <Weather><WeatherMark /><span>27°C<small>Mostly clear</small></span></Weather>
        <ChevronUp size={20} />
        <TrayText $align="center" $margin="0 22px">ENG<br />IN</TrayText>
        <TrayIcons><Wifi size={20} /><Volume2 size={20} /><BatteryMark /></TrayIcons>
        <TrayText $align="right" $margin="0 10px 0 18px">21:48<br />12-10-2025</TrayText>
        <BellMark />
      </Tray>
    </Taskbar>
  );
}

export default function App() {
  return (
    <Screen>
      <GlobalStyle />
      <Browser />
      <Workspace>
        <SideNav />
        <DimmedEditor />
        <RunDrawer />
      </Workspace>
      <SystemBar />
    </Screen>
  );
}
